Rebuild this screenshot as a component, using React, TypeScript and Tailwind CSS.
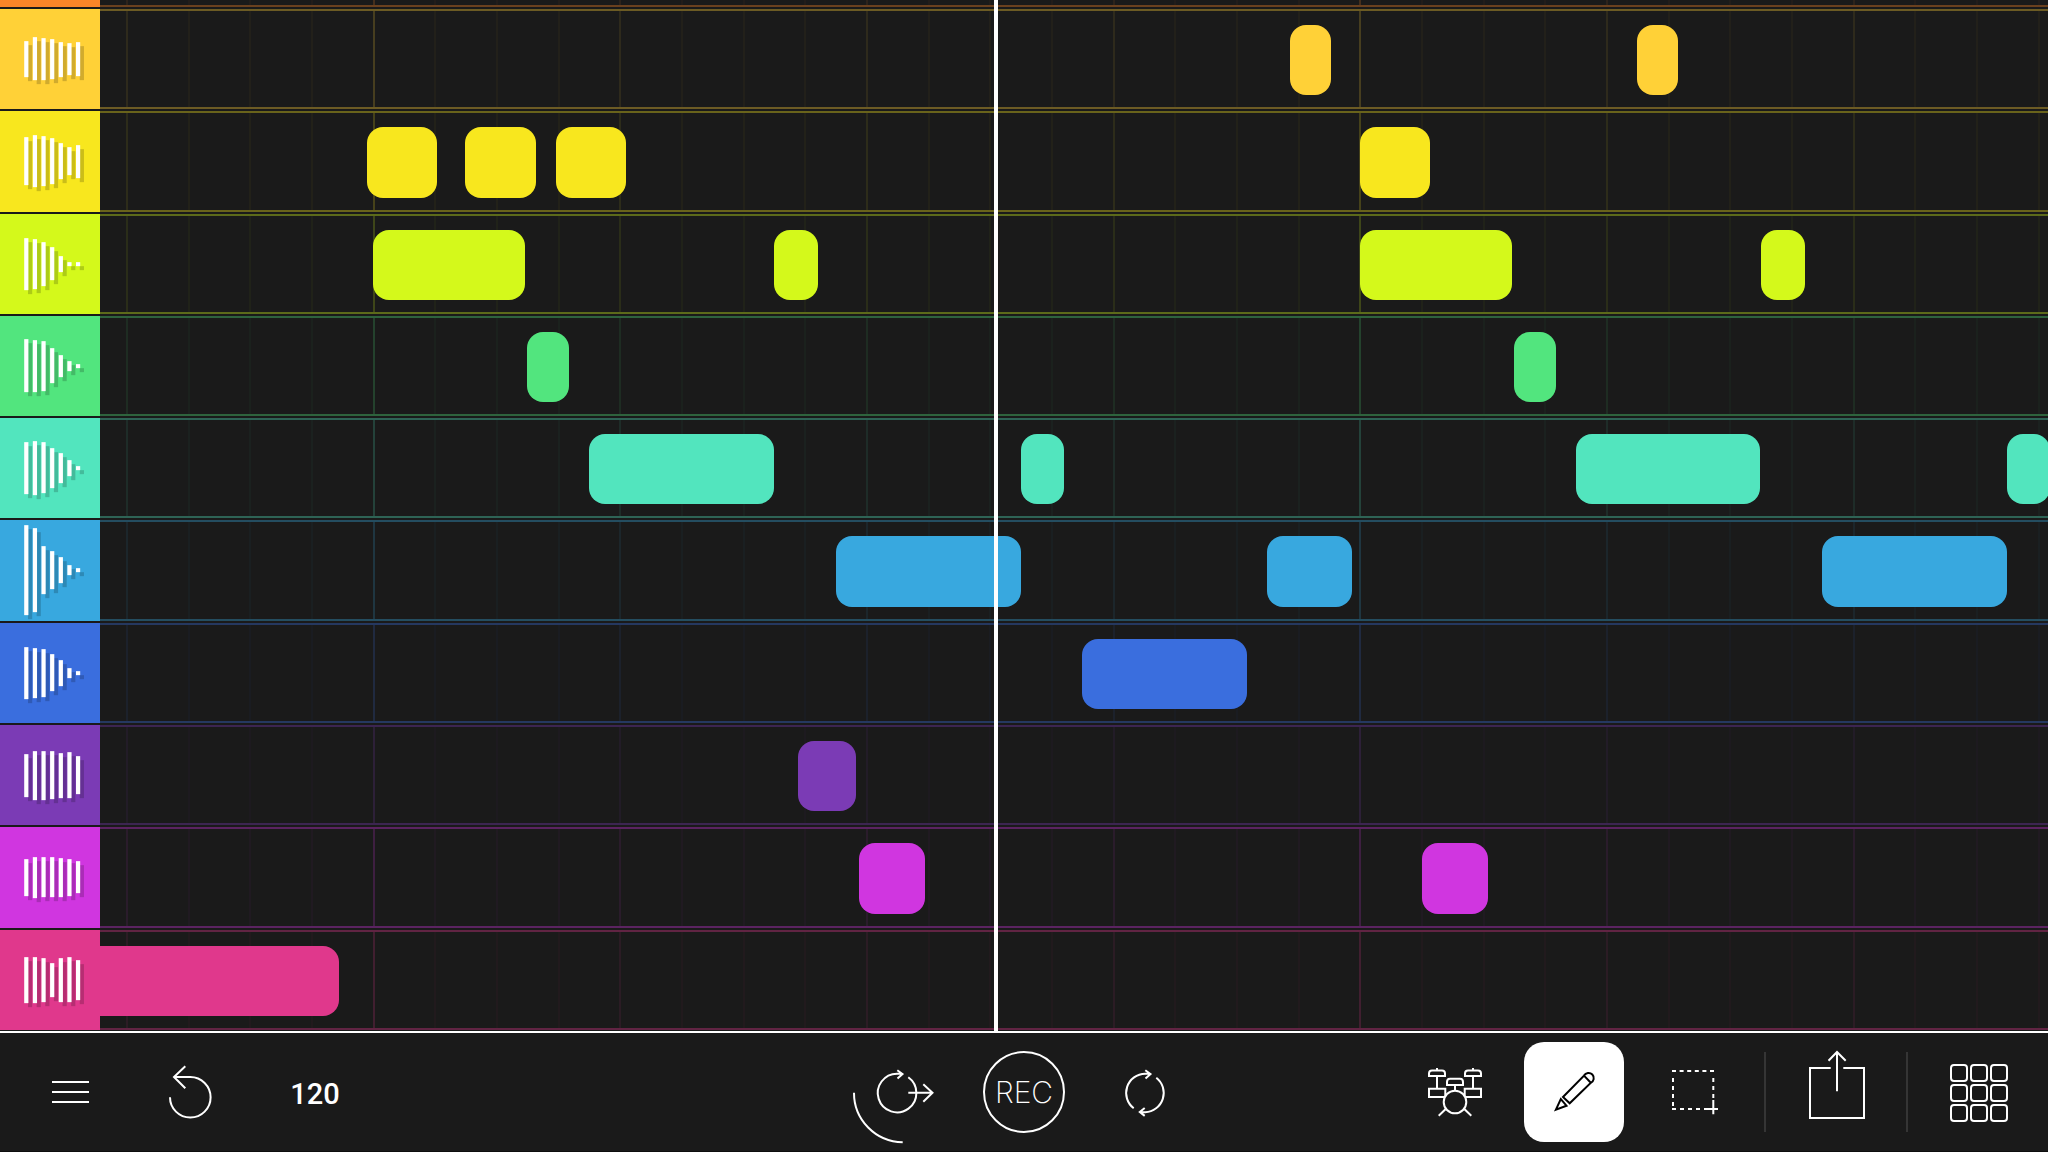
import React from "react";

type Note = [start: number, width: number];
type Track = {
  name: string;
  tint: string;
  wave: [number, number][];
  notes: Note[];
};

// Horizontal scale of the timeline: three sixteenth steps span 185px.
const STEP = 185 / 3;
const FIRST_LINE = 26;
const steps = Array.from({ length: 64 }, (_, i) => i);

const tracks: Track[] = [
  {
    name: "Track 2",
    tint: "text-[#ffd137]",
    wave: [[32, 68], [28, 71], [29, 71], [30, 70], [33, 68], [34, 66], [33, 67]],
    notes: [[1190, 41], [1537, 41]],
  },
  {
    name: "Track 3",
    tint: "text-[#f8e71e]",
    wave: [[26, 74], [24, 76], [25, 75], [27, 73], [32, 68], [36, 64], [34, 67]],
    notes: [[267, 70], [365, 71], [456, 70], [1260, 70]],
  },
  {
    name: "Track 4",
    tint: "text-[#d4f91b]",
    wave: [[24, 76], [25, 75], [28, 72], [33, 66], [42, 58], [48, 52], [48, 52]],
    notes: [[273, 152], [674, 44], [1260, 152], [1661, 44]],
  },
  {
    name: "Track 5",
    tint: "text-[#52e57e]",
    wave: [[23, 76], [24, 76], [25, 75], [32, 67], [39, 61], [45, 55], [48, 52]],
    notes: [[427, 42], [1414, 42]],
  },
  {
    name: "Track 6",
    tint: "text-[#52e5be]",
    wave: [[24, 76], [23, 77], [24, 75], [30, 70], [35, 65], [42, 58], [48, 52]],
    notes: [[489, 185], [921, 43], [1476, 184], [1907, 43]],
  },
  {
    name: "Track 7",
    tint: "text-[#38a8df]",
    wave: [[5, 95], [8, 92], [26, 74], [31, 69], [37, 63], [45, 55], [48, 52]],
    notes: [[736, 185], [1167, 85], [1722, 185]],
  },
  {
    name: "Track 8",
    tint: "text-[#3a6ede]",
    wave: [[24, 76], [25, 75], [26, 74], [31, 68], [37, 63], [45, 55], [48, 52]],
    notes: [[982, 165]],
  },
  {
    name: "Track 9",
    tint: "text-[#7b3bb5]",
    wave: [[29, 72], [26, 75], [26, 75], [26, 74], [28, 73], [27, 73], [31, 69]],
    notes: [[698, 58]],
  },
  {
    name: "Track 10",
    tint: "text-[#d036e0]",
    wave: [[32, 69], [30, 71], [30, 70], [30, 70], [31, 70], [32, 69], [34, 66]],
    notes: [[759, 66], [1322, 66]],
  },
  {
    name: "Track 11",
    tint: "text-[#e0388c]",
    wave: [[27, 73], [27, 73], [28, 72], [33, 67], [28, 72], [27, 72], [30, 70]],
    notes: [[-100, 339]],
  },
];

function Waveform({ wave }: { wave: [number, number][] }) {
  return (
    <svg viewBox="0 0 100 100" className="size-full" aria-hidden="true">
      {wave.map(([top, bottom], i) => (
        <rect key={`s${i}`} x={28 + i * 8.63} y={top + 4} width={4.2} height={bottom - top} fill="#000" fillOpacity={0.18} />
      ))}
      {wave.map(([top, bottom], i) => (
        <rect key={i} x={24.2 + i * 8.63} y={top} width={4.2} height={bottom - top} fill="#fff" />
      ))}
    </svg>
  );
}

function GridLines() {
  return (
    <>
      {steps.map((i) => {
        const weight = i % 16 === 4 ? "opacity-20" : i % 4 === 0 ? "opacity-[0.09]" : "opacity-4";
        return (
          <span
            key={i}
            className={`absolute inset-y-0 w-0.5 bg-current ${weight}`}
            style={{ left: Math.round(FIRST_LINE + i * STEP) }}
          />
        );
      })}
    </>
  );
}

function TrackRow({ track }: { track: Track }) {
  return (
    <div className={`flex min-h-0 flex-1 ${track.tint}`}>
      <button type="button" aria-label={track.name} className="w-[100px] shrink-0 bg-current">
        <Waveform wave={track.wave} />
      </button>
      <div className="relative min-w-0 flex-1 overflow-hidden border-y-2 border-current/36">
        <GridLines />
        {track.notes.map(([start, width]) => (
          <button
            key={start}
            type="button"
            aria-label={`${track.name} note`}
            className="absolute top-3.5 bottom-3 rounded-2xl bg-current"
            style={{ left: start, width }}
          />
        ))}
      </div>
    </div>
  );
}

function Tool({ label, active, children }: { label: string; active?: boolean; children: React.ReactNode }) {
  return (
    <button
      type="button"
      aria-label={label}
      className={`size-[100px] shrink-0 ${active ? "rounded-[20px] bg-white text-black" : "text-white"}`}
    >
      <svg
        viewBox="0 0 100 100"
        className="size-full overflow-visible"
        fill="none"
        stroke="currentColor"
        strokeWidth={2}
        aria-hidden="true"
      >
        {children}
      </svg>
    </button>
  );
}

function Divider() {
  return <span className="h-20 w-0.5 shrink-0 bg-[#353535]" />;
}

export default function App() {
  return (
    <div className="flex h-screen flex-col overflow-hidden bg-[#1a1a1a] font-['Inter',sans-serif] text-white">
      <main className="relative flex min-h-0 flex-1 flex-col gap-0.5 pb-px">
        <div className="flex h-[7px] shrink-0 text-[#f98528]">
          <div className="w-[100px] bg-current" />
          <div className="relative flex-1 overflow-hidden border-b-2 border-current/36">
            <GridLines />
          </div>
        </div>
        {tracks.map((track) => (
          <TrackRow key={track.name} track={track} />
        ))}
        <div className="absolute inset-y-0 left-[994px] w-1 bg-white" />
      </main>

      <footer className="grid h-[121px] shrink-0 grid-cols-[1fr_auto_1fr] items-center border-t-2 border-b border-t-white border-b-[#0e0e0e] px-5">
        <div className="flex items-center gap-5">
          <Tool label="Menu">
            <path d="M32 40h37M32 50h37M32 60h37" />
          </Tool>
          <Tool label="Undo">
            <path d="M30 55.3a20.3 20.3 0 1 0 20.3-20.3H34.5M45.3 24.3 34 35l11.3 11.3" />
          </Tool>
          <button type="button" aria-label="Tempo 120" className="w-[110px] pt-1 text-center font-['Roboto',sans-serif] text-[29px] leading-9 font-medium">
            120
          </button>
        </div>

        <div className="flex items-center gap-5">
          <Tool label="Play loop">
            <path d="M54.3 35.3A19.3 19.3 0 1 1 43.3 31.7H48.5M43.3 28.3l5.2 3.7-5 4.5" />
            <path d="M54.3 50.7h24M69.3 42.3l9.2 8.4-9.2 9" />
            <path d="M0 50.7a49.3 49.3 0 0 0 48.7 49.5" />
          </Tool>
          <button type="button" className="flex size-[100px] items-center justify-center">
            <span className="flex size-[82px] items-center justify-center rounded-full border-2 border-white text-[30px] leading-none font-extralight">
              REC
            </span>
          </button>
          <Tool label="Loop">
            <path d="M39.7 66.3A19.3 19.3 0 0 1 51.2 31.7H56.5M51.3 28.3l5.2 3.7-5 4.5" />
            <path d="M62.3 35.7A19.3 19.3 0 0 1 51.2 70.2H46M50.7 66l-4.9 4 4.9 3.9" />
          </Tool>
        </div>

        <div className="flex items-center justify-end gap-5">
          <Tool label="Drum kit">
            <path d="M25 34v-2.5q0-3 3-3h10q3 0 3 3V34ZM33 26v2.5M33 34v12.5M25 46.7h16.3V55H25Z" />
            <path d="M61 34v-2.5q0-3 3-3h10q3 0 3 3V34ZM69 26v2.5M69 34v12.5M60.7 46.7H77V55H60.7Z" />
            <path d="M43 43v-3q0-3.3 3-3.3h10q3 0 3 3.3v3ZM51 43v6M41.7 67l-7 6.7M60.3 67l7 6.7" />
            <circle cx="51" cy="60" r="11.3" fill="#1a1a1a" />
          </Tool>
          <Tool label="Draw" active>
            <path d="M31.8 67.8 36.8 57l5.7 6.7ZM39 55l21-21.4a5.2 5.2 0 1 1 6.8 7.2L45.7 61.3ZM60 33.6l6.8 7.2" />
          </Tool>
          <Tool label="Select area">
            <path d="M28 29h42" strokeDasharray="4 3.6" />
            <path d="M29 36v32" strokeDasharray="4 4" />
            <path d="M69.3 36v20" strokeDasharray="4 4" />
            <path d="M28 67h33" strokeDasharray="4 4" />
            <path d="M60.7 67H74M69.3 58v14.3" />
          </Tool>
          <Divider />
          <Tool label="Share">
            <path d="M44.7 26H24v50h54V26H57.3M51 10v39.3M42.5 18.7 51 10l8.7 8.7" />
          </Tool>
          <Divider />
          <Tool label="Pads">
            {[0, 1, 2].flatMap((row) =>
              [0, 1, 2].map((col) => (
                <rect key={`${row}-${col}`} x={23 + col * 20} y={23 + row * 20} width={16} height={16} rx={3} />
              )),
            )}
          </Tool>
        </div>
      </footer>
    </div>
  );
}
